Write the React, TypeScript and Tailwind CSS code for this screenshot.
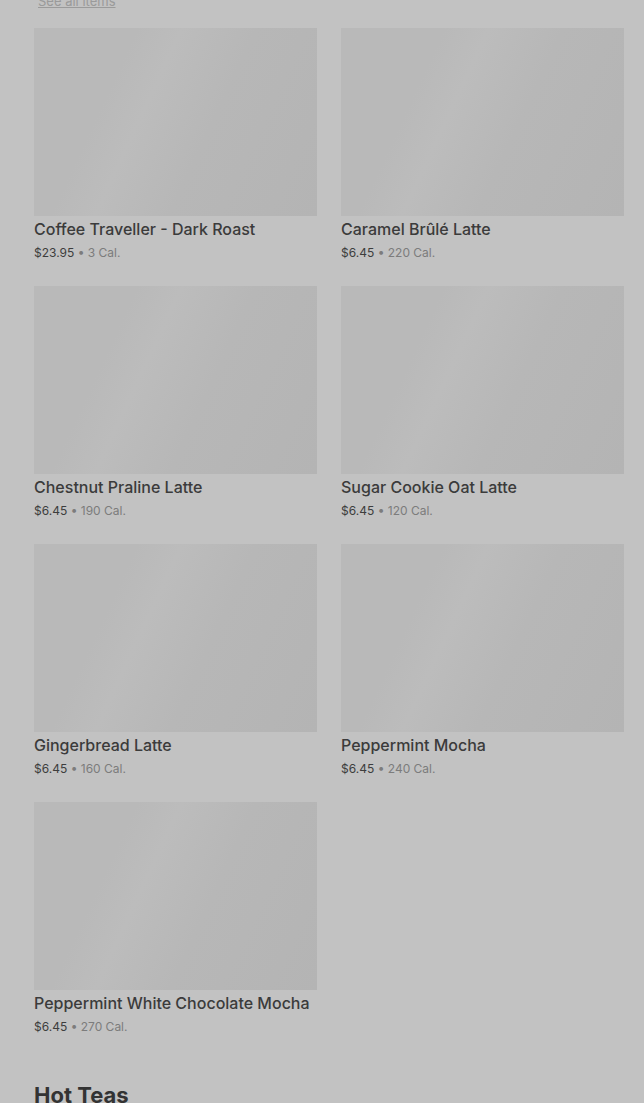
import React from 'react';

const ITEMS = [
  { name: 'Coffee Traveller - Dark Roast', price: '$23.95', cal: '3 Cal.' },
  { name: 'Caramel Brûlé Latte', price: '$6.45', cal: '220 Cal.' },
  { name: 'Chestnut Praline Latte', price: '$6.45', cal: '190 Cal.' },
  { name: 'Sugar Cookie Oat Latte', price: '$6.45', cal: '120 Cal.' },
  { name: 'Gingerbread Latte', price: '$6.45', cal: '160 Cal.' },
  { name: 'Peppermint Mocha', price: '$6.45', cal: '240 Cal.' },
  { name: 'Peppermint White Chocolate Mocha', price: '$6.45', cal: '270 Cal.' },
];

const App: React.FC = () => {
  return (
    <div
      className="min-h-[1103px] w-[644px] overflow-hidden bg-[#c2c2c2] pl-[34px] pr-[20px]"
      style={{ fontFamily: 'Inter, Roboto, "Liberation Sans", sans-serif' }}
    >
      <div className="-mt-[12px] h-[40px] pl-[4px]">
        <span className="text-[13px] leading-[16px] text-[#9a9a9a] underline">See all items</span>
      </div>
      {/* Product grid */}
      <div className="grid grid-cols-2 gap-x-[24px] gap-y-[24px]">
        {ITEMS.map(item => (
          <div key={item.name} className="flex flex-col">
            <div className="h-[188px] w-[283px] bg-[linear-gradient(115deg,#b9b9b9_0%,#b9b9b9_28%,#bcbcbc_40%,#b7b7b7_60%,#b4b4b4_100%)]" />
            <div className="mt-[2px] text-[16px] font-medium leading-[22px] text-[#3b3b3b]">{item.name}</div>
            <div className="mt-[4px] text-[12px] leading-[18px] text-[#3d3d3d]">
              {item.price}
              <span className="text-[#7c7c7c]"> • {item.cal}</span>
            </div>
          </div>
        ))}
      </div>
      <h2 className="mt-[45px] text-[22px] font-bold leading-[28px] text-[#333333]">Hot Teas</h2>
    </div>
  );
};

export default App;
